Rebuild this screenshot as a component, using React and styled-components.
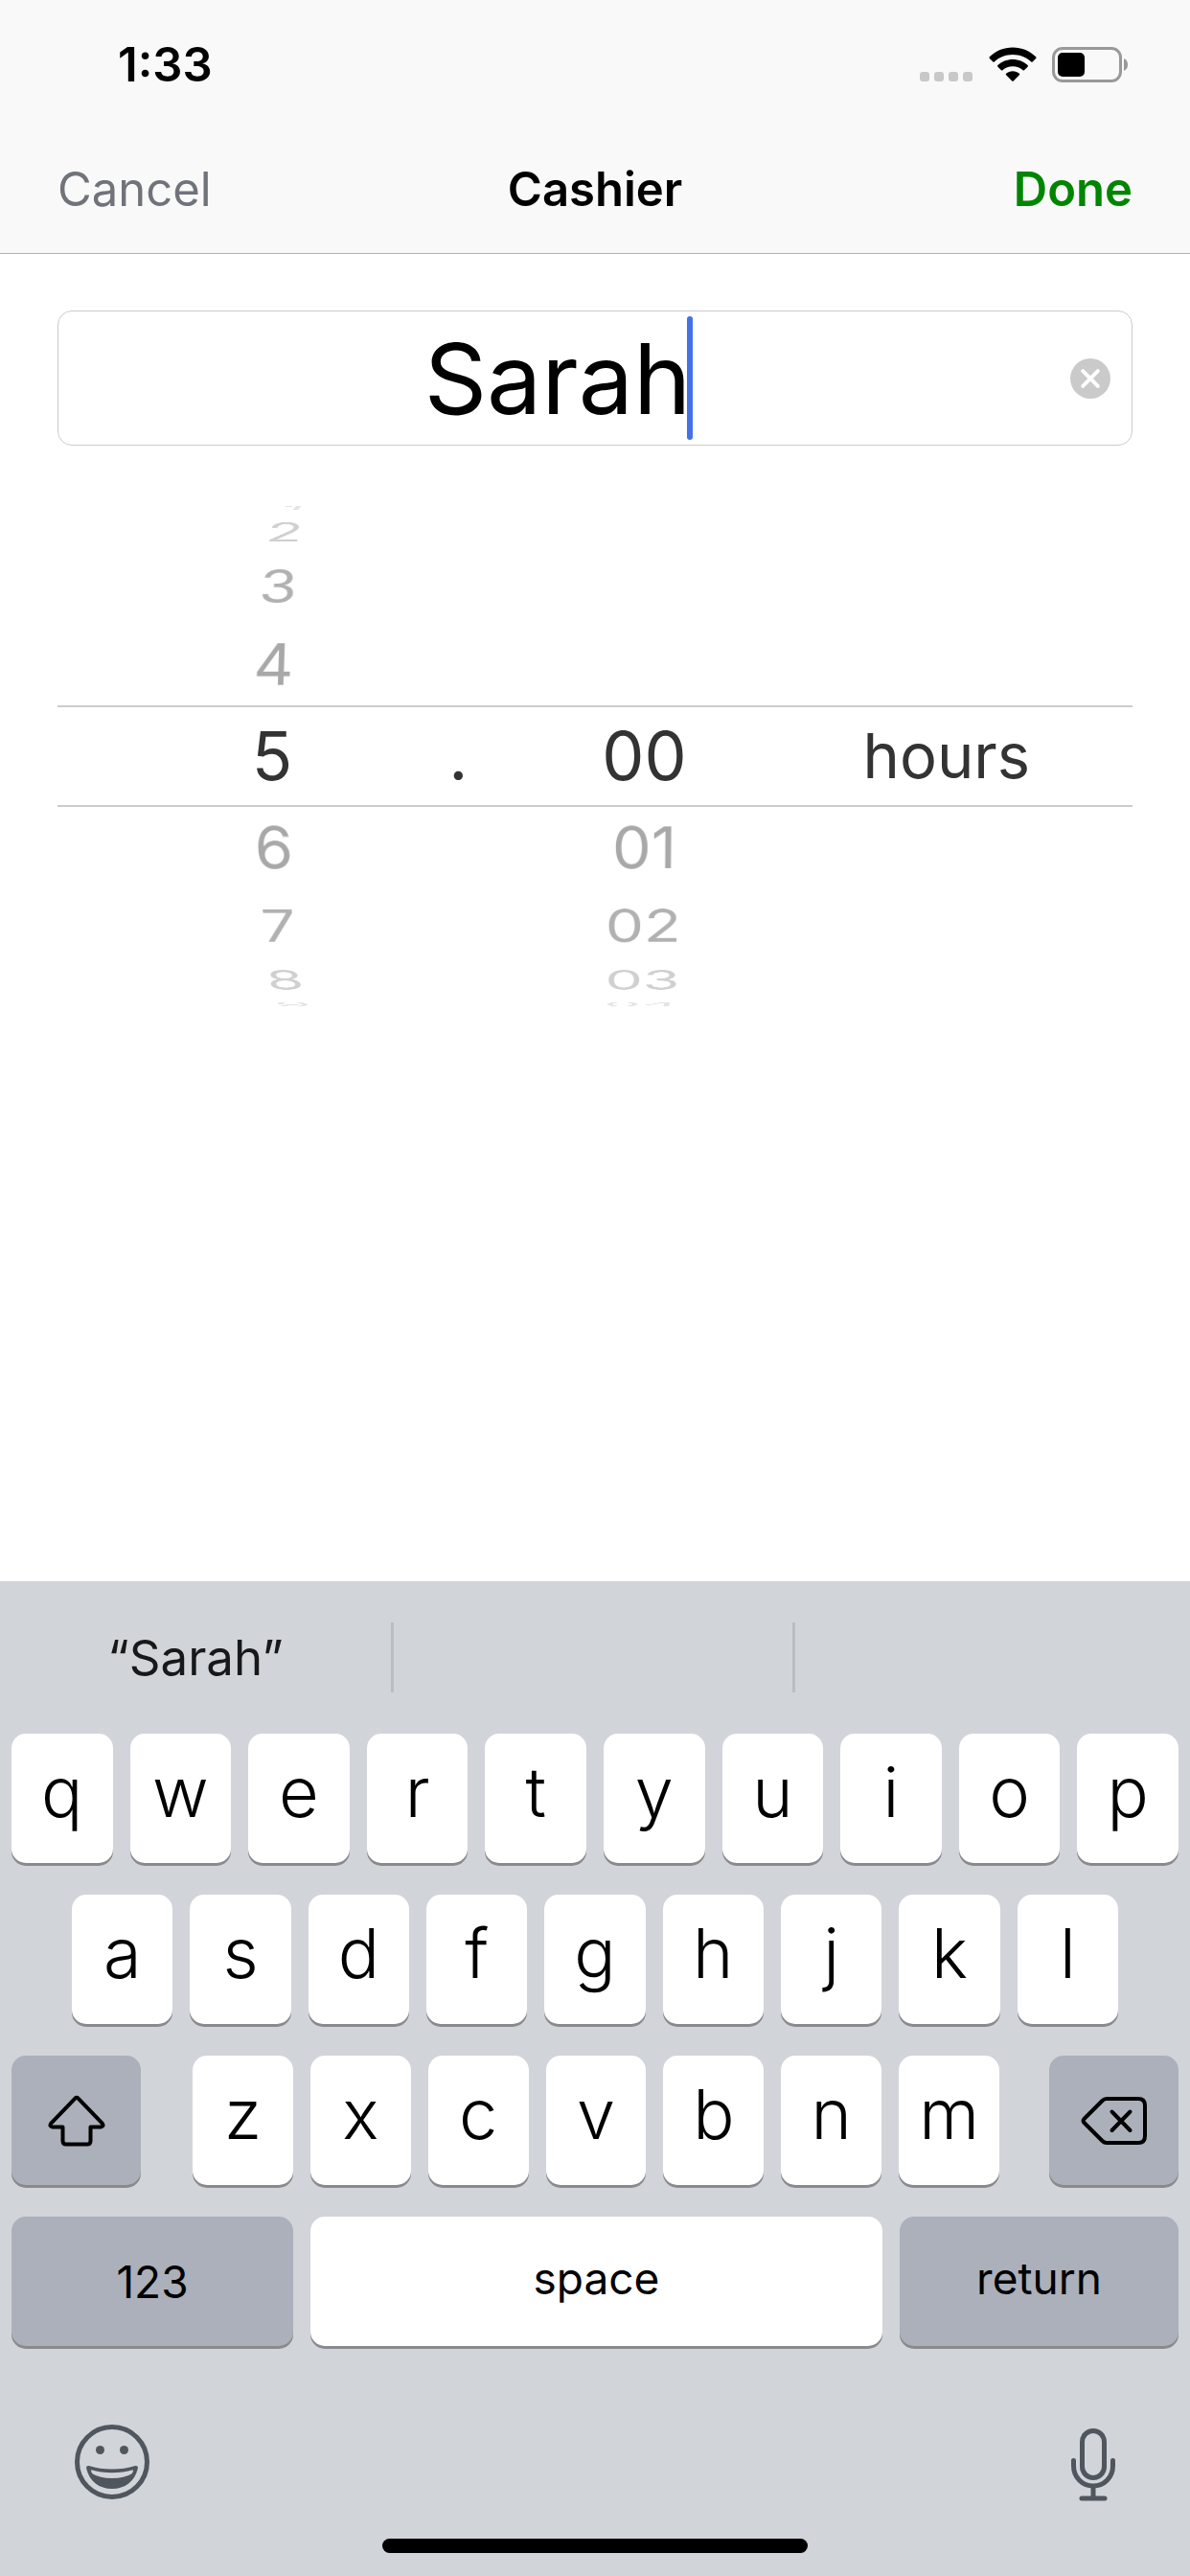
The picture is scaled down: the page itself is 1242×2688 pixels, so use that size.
import React, { useState } from "react";
import styled, { createGlobalStyle } from "styled-components";

const GlobalStyle = createGlobalStyle`
  *, *::before, *::after { box-sizing: border-box; }
  body {
    margin: 0;
    background: #ffffff;
    font-family: Inter, "Liberation Sans", sans-serif;
    color: #000000;
  }
  button, input { font: inherit; color: inherit; }
  button { cursor: pointer; }
`;

const Screen = styled.div`
  display: flex;
  flex-direction: column;
  min-height: 100vh;
`;

const Header = styled.header`
  background: #f9f9f9;
  border-bottom: 1px solid #b2b2b2;
`;

const StatusBar = styled.div`
  display: flex;
  align-items: center;
  justify-content: space-between;
  height: 132px;
  padding: 3px 64px 0 123px;
`;

const Clock = styled.time`
  font-size: 49px;
  font-weight: 600;
  line-height: 60px;
`;

const StatusIcons = styled.div`
  display: flex;
  align-items: center;
  gap: 16px;
`;

const NavBar = styled.nav`
  display: grid;
  grid-template-columns: 1fr auto 1fr;
  align-items: center;
  height: 132px;
  padding: 0 60px;
`;

const Title = styled.h1`
  margin: 0;
  font-size: 49px;
  font-weight: 600;
  line-height: 60px;
`;

const NavButton = styled.button`
  padding: 0;
  border: 0;
  background: none;
  font-size: 49px;
  line-height: 60px;
  justify-self: ${(p) => (p.$primary ? "end" : "start")};
  font-weight: ${(p) => (p.$primary ? 600 : 400)};
  color: ${(p) => (p.$primary ? "#008500" : "#70737a")};
`;

const Main = styled.main`
  flex: 1;
  padding: 59px 60px 0;
`;

const Field = styled.label`
  display: flex;
  align-items: center;
  height: 141px;
  padding: 0 22px 0 0;
  border: 1px solid #cccccc;
  border-radius: 15px;
`;

const FieldText = styled.span`
  flex: 1;
  display: flex;
  align-items: center;
  justify-content: center;
  padding-right: 12px;
`;

const NameInput = styled.input`
  field-sizing: content;
  min-width: 8px;
  padding: 0;
  border: 0;
  outline: 0;
  background: none;
  font-size: 102px;
  line-height: 130px;
  caret-color: transparent;
`;

const Caret = styled.span`
  width: 6px;
  height: 129px;
  margin-left: -4px;
  border-radius: 3px;
  background: #4470ea;
`;

const ClearButton = styled.button`
  display: flex;
  padding: 0;
  border: 0;
  background: none;
`;

/* Picker: a drum of rows 20 degrees apart, seen from 3400px away. */
const Picker = styled.div`
  display: grid;
  height: 648px;
`;

const SelectionBand = styled.div`
  grid-area: 1 / 1;
  align-self: center;
  height: 106px;
  border: solid #cccccc;
  border-width: 2px 0;
`;

const Columns = styled.div`
  grid-area: 1 / 1;
  display: grid;
  grid-template-columns: 194fr 194fr 194fr 412fr;
  padding-left: 127px;
  perspective: 3400px;
`;

const Drum = styled.ul`
  display: grid;
  align-items: center;
  justify-items: center;
  margin: 0;
  padding: 0 0 0 ${(p) => (p.$wide ? "24px" : "0")};
  list-style: none;
  transform-style: preserve-3d;
  transform: translateZ(-281px);
`;

const FADE = ["#333333", "#a8a8a8", "#b1b1b1", "#d0d0d0", "#e4e4e4"];

const Row = styled.li`
  grid-area: 1 / 1;
  font-size: ${(p) => (p.$step === 0 && !p.$unit ? 70 : 65)}px;
  line-height: 96px;
  color: ${(p) => FADE[Math.abs(p.$step)]};
  transform: rotateX(${(p) => p.$step * -20}deg) translateZ(281px);
`;

const Keyboard = styled.section`
  background: #d1d4d9;
`;

const Suggestions = styled.div`
  display: grid;
  grid-template-columns: 411fr 419fr 412fr;
  align-items: center;
  height: 159px;
`;

const Suggestion = styled.button`
  height: 73px;
  padding: 0;
  border: 0;
  border-right: ${(p) => (p.$last ? "0" : "3px solid #babdc2")};
  background: none;
  font-size: 51px;
  line-height: 73px;
  color: #161819;
`;

const KeyRows = styled.div`
  display: flex;
  flex-direction: column;
  gap: 33px;
`;

const KeyRow = styled.div`
  display: flex;
  gap: 18px;
  padding: 0 ${(p) => (p.$inset ? 75 : 12)}px;
`;

const LetterGroup = styled.div`
  flex: 1;
  display: flex;
  gap: 18px;
  padding: 0 34px 0 36px;
`;

const Key = styled.button`
  flex: ${(p) => (p.$width ? `0 0 ${p.$width}` : "1 1 0")};
  display: flex;
  align-items: center;
  justify-content: center;
  min-width: 0;
  height: 135px;
  padding: 0 0 ${(p) => p.$lift || 0}px;
  border: 0;
  border-radius: 15px;
  background: ${(p) => (p.$dark ? "#abb0ba" : "#ffffff")};
  box-shadow: 0 3px 0 #898a8d;
  font-size: ${(p) => (p.$label ? 46 : 72)}px;
  font-weight: ${(p) => (p.$label ? 400 : 350)};
  line-height: 90px;
`;

const KeyboardFooter = styled.div`
  display: flex;
  align-items: flex-start;
  justify-content: space-between;
  padding: 82px 78px 0;
`;

const FooterButton = styled.button`
  display: flex;
  padding: 0;
  border: 0;
  background: none;
  color: #50565d;
`;

const HomeBar = styled.div`
  width: 444px;
  height: 15px;
  margin: 39px auto 24px;
  border-radius: 8px;
  background: #000000;
`;

const SignalIcon = () => (
  <svg width="56" height="37" viewBox="0 0 56 37" fill="#c8c8c8" aria-hidden="true">
    {[0, 15, 30, 45].map((x) => (
      <rect key={x} x={x} y="26" width="10" height="10" rx="3" />
    ))}
  </svg>
);

const WifiIcon = () => (
  <svg width="50" height="37" viewBox="0 0 50 37" aria-hidden="true">
    <path d="M25 0.5C34.4 0.5 43 4.2 49.2 10.3Q49.9 11.1 49.2 11.9L45.6 15.5Q44.9 16.1 44.2 15.5C39.1 10.7 32.400 8 25 8S10.9 10.7 5.800 15.500Q5.100 16.100 4.400 15.500L0.800 11.900Q0.100 11.100 0.800 10.300C7 4.200 15.600 0.500 25 0.500Z" />
    <path d="M25 13C31.100 13 36.500 15.300 40.600 19.100Q41.300 19.900 40.600 20.700L37 24.300Q36.300 24.900 35.600 24.300C32.800 21.700 29.100 20.200 25 20.200S17.200 21.700 14.400 24.300Q13.700 24.900 13 24.300L9.400 20.700Q8.700 19.900 9.400 19.100C13.500 15.300 18.900 13 25 13Z" />
    <path d="M25 25.200C27.700 25.200 30.100 26.100 31.900 27.700Q32.700 28.500 31.900 29.300L25.700 35.600Q25 36.300 24.300 35.600L18.100 29.300Q17.300 28.500 18.100 27.700C19.900 26.100 22.300 25.200 25 25.200Z" />
  </svg>
);

const BatteryIcon = () => (
  <svg width="80" height="37" viewBox="0 0 80 37" aria-hidden="true">
    <rect x="1.5" y="1.5" width="70" height="34" rx="9.500" fill="none" stroke="#999999" strokeWidth="3" />
    <rect x="6" y="6" width="28" height="25" rx="5" />
    <path d="M75 12C78 13.200 79 15.800 79 18.500S78 23.800 75 25Z" fill="#999999" />
  </svg>
);

const ClearIcon = () => (
  <svg width="42" height="42" viewBox="0 0 42 42" aria-hidden="true">
    <circle cx="21" cy="21" r="21" fill="#cacaca" />
    <path d="M13.200 13.200L28.800 28.800M28.800 13.200L13.200 28.800" stroke="#ffffff" strokeWidth="4" strokeLinecap="round" />
  </svg>
);

const ShiftIcon = () => (
  <svg width="60" height="54" viewBox="0 0 60 54" fill="none" stroke="#000000" strokeWidth="4" strokeLinejoin="round" aria-hidden="true">
    <path d="M28.400 3.700Q30 2 31.600 3.700L56.700 29.600Q59 33 55 33.500H44.500V48Q44.500 51.500 41 51.500H19Q15.500 51.500 15.500 48V33.500H5Q1 33 3.300 29.600Z" />
  </svg>
);

const DeleteIcon = () => (
  <svg width="70" height="52" viewBox="0 0 70 52" fill="none" stroke="#000000" strokeWidth="4" strokeLinecap="round" strokeLinejoin="round" aria-hidden="true">
    <path d="M27 3H60Q67 3 67 10V42Q67 49 60 49H27Q24.500 49 22.500 47L3.500 28Q1.500 26 3.500 24L22.500 5Q24.500 3 27 3Z" />
    <path d="M32.500 16.500L51.500 36M51.500 16.500L32.500 36" />
  </svg>
);

const EmojiIcon = () => (
  <svg width="78" height="78" viewBox="0 0 78 78" aria-hidden="true">
    <circle cx="39" cy="39" r="36.500" fill="none" stroke="currentColor" strokeWidth="5" />
    <circle cx="26.500" cy="26.500" r="4.500" fill="currentColor" />
    <circle cx="51.500" cy="26.500" r="4.500" fill="currentColor" />
    <path fillRule="evenodd" fill="currentColor" d="M14.800 43Q26 46.500 39 46.500T63.200 43Q66.500 42.700 65.800 46C62.500 59.500 52.500 67 39 67S15.500 59.500 12.200 46Q11.500 42.700 14.800 43ZM17.200 47.200Q16.400 49.300 18.400 51.200Q26 56 39 56T59.600 51.200Q61.600 49.300 60.800 47.200Q51 50.200 39 50.200T17.200 47.200Z" />
  </svg>
);

const MicIcon = () => (
  <svg width="46" height="80" viewBox="0 -4 46 80" fill="none" stroke="currentColor" strokeWidth="5" strokeLinecap="round" aria-hidden="true">
    <rect x="11.500" y="2.500" width="23" height="49" rx="11.500" />
    <path d="M2.500 33.500V39C2.500 51 11.500 60 23 60S43.500 51 43.500 39V33.500M23 60V73M11 73H35" />
  </svg>
);

const hours = [
  { step: -4, text: "1" },
  { step: -3, text: "2" },
  { step: -2, text: "3" },
  { step: -1, text: "4" },
  { step: 0, text: "5" },
  { step: 1, text: "6" },
  { step: 2, text: "7" },
  { step: 3, text: "8" },
  { step: 4, text: "9" },
];

const hundredths = [
  { step: 0, text: "00" },
  { step: 1, text: "01" },
  { step: 2, text: "02" },
  { step: 3, text: "03" },
  { step: 4, text: "04" },
];

function Wheel({ rows, label, unit }) {
  return (
    <Drum aria-label={label} $wide={unit}>
      {rows.map((row) => (
        <Row key={row.text} $step={row.step} $unit={unit}>
          {row.text}
        </Row>
      ))}
    </Drum>
  );
}

function Letters({ text }) {
  return text.split("").map((letter) => (
    <Key key={letter} type="button" $lift={14}>
      {letter}
    </Key>
  ));
}

export default function App() {
  const [name, setName] = useState("Sarah");

  return (
    <>
      <GlobalStyle />
      <Screen>
        <Header>
          <StatusBar>
            <Clock>1:33</Clock>
            <StatusIcons>
              <SignalIcon />
              <WifiIcon />
              <BatteryIcon />
            </StatusIcons>
          </StatusBar>
          <NavBar>
            <NavButton type="button">Cancel</NavButton>
            <Title>Cashier</Title>
            <NavButton type="button" $primary>
              Done
            </NavButton>
          </NavBar>
        </Header>

        <Main>
          <Field>
            <FieldText>
              <NameInput
                type="text"
                aria-label="Cashier name"
                value={name}
                onChange={(event) => setName(event.target.value)}
              />
              <Caret />
            </FieldText>
            <ClearButton type="button" aria-label="Clear" onClick={() => setName("")}>
              <ClearIcon />
            </ClearButton>
          </Field>

          <Picker>
            <SelectionBand />
            <Columns>
              <Wheel label="Hours" rows={hours} />
              <Wheel label="Separator" rows={[{ step: 0, text: "." }]} />
              <Wheel label="Hundredths" rows={hundredths} />
              <Wheel label="Unit" rows={[{ step: 0, text: "hours" }]} unit />
            </Columns>
          </Picker>
        </Main>

        <Keyboard aria-label="Keyboard">
          <Suggestions>
            <Suggestion type="button">“{name}”</Suggestion>
            <Suggestion type="button" aria-label="Empty suggestion" />
            <Suggestion type="button" aria-label="Empty suggestion" $last />
          </Suggestions>
          <KeyRows>
            <KeyRow>
              <Letters text="qwertyuiop" />
            </KeyRow>
            <KeyRow $inset>
              <Letters text="asdfghjkl" />
            </KeyRow>
            <KeyRow>
              <Key type="button" aria-label="Shift" $dark $width="135px">
                <ShiftIcon />
              </Key>
              <LetterGroup>
                <Letters text="zxcvbnm" />
              </LetterGroup>
              <Key type="button" aria-label="Delete" $dark $width="135px">
                <DeleteIcon />
              </Key>
            </KeyRow>
            <KeyRow>
              <Key type="button" $dark $label $width="294px">
                123
              </Key>
              <Key type="button" $label $lift={8}>
                space
              </Key>
              <Key type="button" $dark $label $lift={8} $width="291px">
                return
              </Key>
            </KeyRow>
          </KeyRows>
          <KeyboardFooter>
            <FooterButton type="button" aria-label="Emoji">
              <EmojiIcon />
            </FooterButton>
            <FooterButton type="button" aria-label="Dictation">
              <MicIcon />
            </FooterButton>
          </KeyboardFooter>
          <HomeBar />
        </Keyboard>
      </Screen>
    </>
  );
}
